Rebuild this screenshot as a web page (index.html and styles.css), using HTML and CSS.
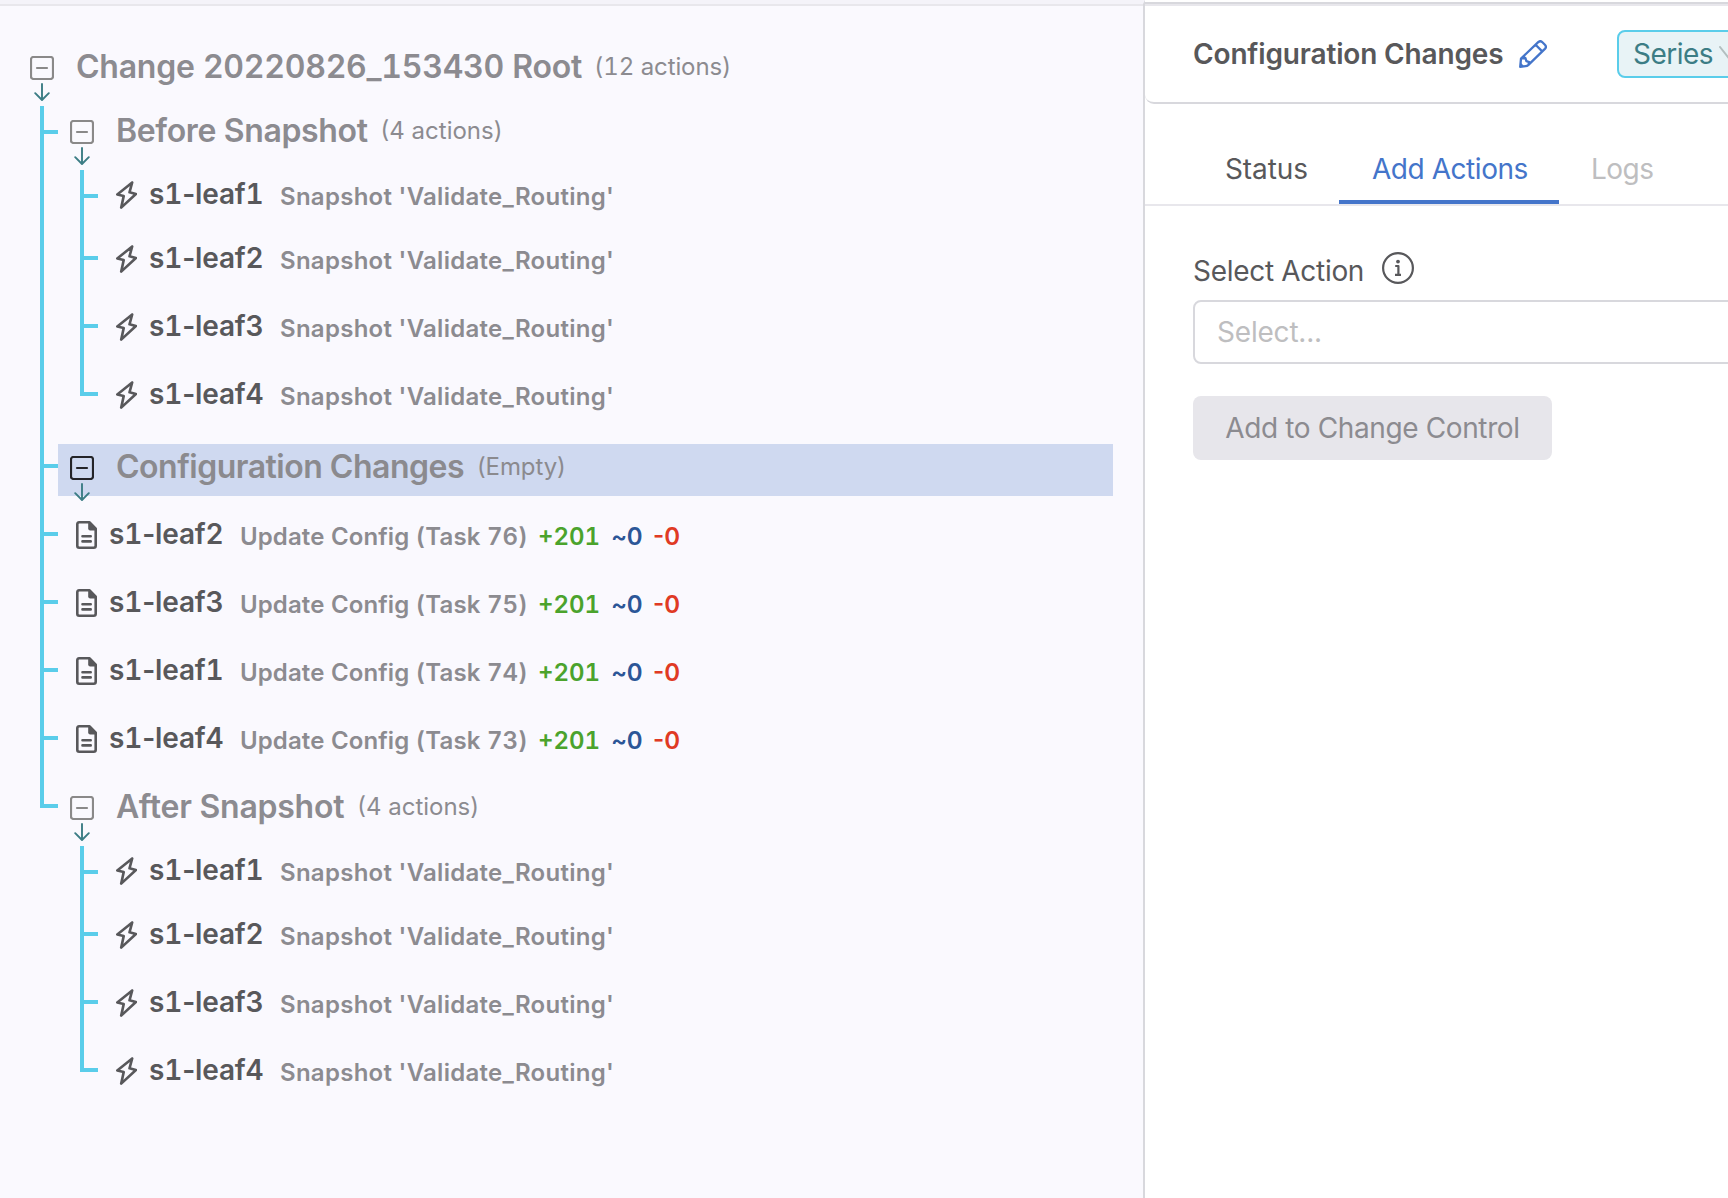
FILE: index.html
```
<!DOCTYPE html>
<html lang="en">
<head>
<meta charset="utf-8">
<title>Change Control</title>
<link rel="stylesheet" href="styles.css">
</head>
<body>
<svg class="sprite" aria-hidden="true">
  <symbol id="collapse" viewBox="0 0 24 24"><rect x="1" y="1" width="22" height="22" rx="2.5"/><path d="M7 12h10"/></symbol>
  <symbol id="down" viewBox="0 0 16 18"><path d="M8 1v15.8M1.2 10.2 8 17l6.8-6.8"/></symbol>
  <symbol id="bolt" viewBox="0 0 21 28"><path d="M16.2 1.4 1.3 13.5l6.4 1.6L5.2 26.6 19.9 13l-6.4-1.7z"/></symbol>
  <symbol id="doc" viewBox="0 0 21 28"><path d="M3.2 1.3h10.4l6.1 6.3v17.1a2 2 0 0 1-2 2H3.2a2 2 0 0 1-1.9-2V3.3a2 2 0 0 1 1.9-2z"/><path class="fold" fill="currentColor" stroke="none" d="M12.2 1v6.4a2 2 0 0 0 2 2h6V7.6L14 1z"/><path d="M6.5 15.2h8.2M6.5 20.4h8.2"/></symbol>
</svg>
<div class="app">
  <main class="stage">
    <ul class="tree root">
      <li>
        <div class="row group"><svg class="box"><use href="#collapse"/></svg><svg class="arrow"><use href="#down"/></svg><span class="title long">Change 20220826_153430 Root</span><span class="count">(12 actions)</span></div>
        <ul class="tree">
          <li>
            <div class="row group"><svg class="box"><use href="#collapse"/></svg><svg class="arrow"><use href="#down"/></svg><span class="title">Before Snapshot</span><span class="count">(4 actions)</span></div>
            <ul class="tree">
              <li><div class="row leaf"><svg class="glyph"><use href="#bolt"/></svg><span class="name">s<b>1</b>-leaf<b>1</b></span><span class="desc">Snapshot 'Validate_Routing'</span></div></li>
              <li><div class="row leaf"><svg class="glyph"><use href="#bolt"/></svg><span class="name">s<b>1</b>-leaf<b>2</b></span><span class="desc">Snapshot 'Validate_Routing'</span></div></li>
              <li><div class="row leaf"><svg class="glyph"><use href="#bolt"/></svg><span class="name">s<b>1</b>-leaf<b>3</b></span><span class="desc">Snapshot 'Validate_Routing'</span></div></li>
              <li><div class="row leaf"><svg class="glyph"><use href="#bolt"/></svg><span class="name">s<b>1</b>-leaf<b>4</b></span><span class="desc">Snapshot 'Validate_Routing'</span></div></li>
            </ul>
          </li>
          <li>
            <div class="row group selected"><svg class="box"><use href="#collapse"/></svg><svg class="arrow"><use href="#down"/></svg><span class="title">Configuration Changes</span><span class="count">(Empty)</span></div>
          </li>
          <li><div class="row leaf"><svg class="glyph"><use href="#doc"/></svg><span class="name">s<b>1</b>-leaf<b>2</b></span><span class="desc task">Update Config (Task 76)</span><span class="added">+201</span><span class="changed">~0</span><span class="removed">-0</span></div></li>
          <li><div class="row leaf"><svg class="glyph"><use href="#doc"/></svg><span class="name">s<b>1</b>-leaf<b>3</b></span><span class="desc task">Update Config (Task 75)</span><span class="added">+201</span><span class="changed">~0</span><span class="removed">-0</span></div></li>
          <li><div class="row leaf"><svg class="glyph"><use href="#doc"/></svg><span class="name">s<b>1</b>-leaf<b>1</b></span><span class="desc task">Update Config (Task 74)</span><span class="added">+201</span><span class="changed">~0</span><span class="removed">-0</span></div></li>
          <li><div class="row leaf"><svg class="glyph"><use href="#doc"/></svg><span class="name">s<b>1</b>-leaf<b>4</b></span><span class="desc task">Update Config (Task 73)</span><span class="added">+201</span><span class="changed">~0</span><span class="removed">-0</span></div></li>
          <li>
            <div class="row group"><svg class="box"><use href="#collapse"/></svg><svg class="arrow"><use href="#down"/></svg><span class="title after">After Snapshot</span><span class="count">(4 actions)</span></div>
            <ul class="tree">
              <li><div class="row leaf"><svg class="glyph"><use href="#bolt"/></svg><span class="name">s<b>1</b>-leaf<b>1</b></span><span class="desc">Snapshot 'Validate_Routing'</span></div></li>
              <li><div class="row leaf"><svg class="glyph"><use href="#bolt"/></svg><span class="name">s<b>1</b>-leaf<b>2</b></span><span class="desc">Snapshot 'Validate_Routing'</span></div></li>
              <li><div class="row leaf"><svg class="glyph"><use href="#bolt"/></svg><span class="name">s<b>1</b>-leaf<b>3</b></span><span class="desc">Snapshot 'Validate_Routing'</span></div></li>
              <li><div class="row leaf"><svg class="glyph"><use href="#bolt"/></svg><span class="name">s<b>1</b>-leaf<b>4</b></span><span class="desc">Snapshot 'Validate_Routing'</span></div></li>
            </ul>
          </li>
        </ul>
      </li>
    </ul>
  </main>
  <aside class="panel">
    <header class="head">
      <h1>Configuration Changes</h1>
      <svg class="pencil" viewBox="0 0 28 28"><path d="M1.2 26.8 2 18.6 19.2 2.2a3 3 0 0 1 4.2 0l2.5 2.5a3 3 0 0 1 0 4.2L9.2 25.1a4 4 0 0 1-2.6 1.1zM16.6 4.8l6.6 6.6M2.6 18.4 6.4 18l1 3.2 2.8.9-.8 2.8"/><path class="tip" d="m1.2 26.8.5-4.4 3.6 4z"/></svg>
      <div class="series">Series<svg class="caret" viewBox="0 0 24 16"><path d="m1 1 11 14L23 1"/></svg></div>
    </header>
    <nav class="tabs"><span class="tab">Status</span><span class="tab active">Add Actions</span><span class="tab disabled">Logs</span></nav>
    <section class="form">
      <div class="label"><span>Select Action</span><svg class="info" viewBox="0 0 32 32"><circle cx="16" cy="16" r="14.9"/><circle class="dot" cx="16" cy="9.6" r="1.9"/><path d="M13.2 14h3.2v8.6M13 22.8h6"/></svg></div>
      <div class="select">Select...</div>
      <button class="add" disabled>Add to Change Control</button>
    </section>
  </aside>
</div>
</body>
</html>
```
FILE: styles.css
```
* { box-sizing: border-box; }
body { margin: 0; font-family: Inter, sans-serif; font-size: 28px; color: #58585b; background: #fff; overflow: hidden; }
.sprite { position: absolute; width: 0; height: 0; }
svg { flex: none; fill: none; stroke: currentColor; stroke-linecap: round; stroke-linejoin: round; }
.app { display: flex; width: 1728px; height: 1198px; overflow: hidden; }

/* change tree */
.stage { width: 1145px; flex: none; background: #faf9fe; border-right: 2px solid #d8d8dd; border-top: 4px solid #f4f3f9; }
.root { border-top: 2px solid #e8e7ec; }
ul { list-style: none; margin: 0; padding: 0; }
.root { padding: 38px 30px 0 18px; }
li { position: relative; }
.tree .tree { padding-left: 40px; }
.tree .tree > li { padding-bottom: 16px; }
.tree .tree > li:first-child:not(:has(.tree)) { padding-bottom: 12px; }
.tree .tree > li:has(> .tree) { padding-bottom: 4px; }
.tree .tree > li::before { content: ""; position: absolute; left: -14px; top: 20px; width: 14px; height: 4px; background: #5acdea; }
.tree .tree > li:first-child::before { top: 22px; }
.tree .tree > li::after { content: ""; position: absolute; left: -18px; top: 0; bottom: 0; width: 4px; background: #5acdea; }
.tree .tree > li:first-child::after { top: -2px; }
.tree .tree > li:last-child::after { bottom: auto; height: 24px; }
.row { position: relative; display: flex; align-items: flex-start; height: 52px; line-height: 44px; white-space: nowrap; }
.group { padding-left: 12px; margin-bottom: 12px; color: #8c8b90; }
.box { width: 24px; height: 24px; margin-top: 12px; stroke-width: 2.2; color: #8a8989; }
.arrow { position: absolute; left: 16px; top: 39px; width: 16px; height: 18px; color: #3c7d85; stroke-width: 1.9; }
.title { margin-left: 22px; font-size: 32px; line-height: 45px; font-weight: 600; letter-spacing: -.35px; }
.title.long { font-variant-numeric: tabular-nums; letter-spacing: -.25px; }
.title.after { letter-spacing: -.25px; }
.count { margin-left: 13px; margin-top: 1px; font-size: 24px; }
.title.long + .count { margin-left: 12px; font-variant-numeric: tabular-nums; letter-spacing: -.1px; }
.selected { background: #cfd9f0; margin-bottom: 0; color: #8b8a8e; }
.selected .title { letter-spacing: -.5px; }
.selected .count { letter-spacing: -.1px; }
.selected .box { color: #242428; }
.leaf { padding-left: 18px; font-weight: 600; color: #58585b; }
.glyph { width: 21px; height: 28px; margin-top: 9px; stroke-width: 2.6; }
.name { width: 131px; margin-left: 12px; letter-spacing: -.15px; }
.name b { font-weight: 600; font-variant-numeric: tabular-nums; }
.desc, .added, .changed, .removed { margin-top: 3px; font-size: 24px; }
.desc { color: #8c8b90; letter-spacing: .28px; }
.task { width: 298px; letter-spacing: .1px; font-variant-numeric: tabular-nums; }
.added { width: 73px; color: #4ba32c; font-variant-numeric: tabular-nums; }
.changed { width: 42px; color: #2c5697; letter-spacing: -.3px; }
.removed { color: #e03a24; }

/* detail panel */
.panel { flex: none; width: 800px; background: #fff; padding-top: 2px; }
.head { display: flex; align-items: center; height: 102px; padding-top: 2px; padding-left: 48px; border-top: 2px solid #d8d8dd; border-bottom: 2px solid #d8d8dd; border-bottom-left-radius: 9px; box-shadow: inset 0 2px #e8e7ec; }
h1 { width: 326px; margin: 0; font-size: 28px; font-weight: 600; letter-spacing: -.15px; color: #58585a; }
.pencil { width: 28px; height: 28px; color: #4475ca; stroke-width: 2.3; }
.tip { fill: currentColor; stroke: none; }
.series { display: flex; align-items: center; width: 160px; height: 48px; margin-left: 70px; padding-left: 14px; border: 2px solid #5acdea; border-radius: 8px; background: #e8f3f6; color: #3c7d85; letter-spacing: -.5px; }
.caret { width: 24px; height: 16px; margin-left: 6px; color: #b3bfc0; stroke-width: 2; }
.tabs { display: flex; align-items: flex-end; height: 102px; padding-left: 48px; border-bottom: 2px solid #e8e7ec; }
.tab { height: 67px; padding-left: 32px; line-height: 65px; border-bottom: 4px solid transparent; color: #58585a; width: 146px; letter-spacing: -.1px; }
.active { width: 220px; padding-left: 33px; color: #4475ca; border-color: #4475ca; letter-spacing: -.45px; }
.disabled { color: #bebec0; letter-spacing: -.5px; }
.form { padding: 44px 0 0 48px; }
.label { display: flex; height: 50px; line-height: 43px; letter-spacing: -.3px; }
.label span { width: 189px; }
.info { width: 32px; height: 32px; margin-top: 2px; stroke-width: 2.2; stroke-linecap: butt; }
.dot { fill: currentColor; stroke: none; }
.select { height: 64px; padding-left: 22px; line-height: 61px; border: 2px solid #d8d8dd; border-radius: 8px; color: #bebec0; letter-spacing: -.2px; }
.add { display: block; width: 359px; height: 64px; margin-top: 32px; padding: 0; border: 0; border-radius: 8px; background: #e7e6eb; color: #8c8b90; font: 400 28px/64px Inter, sans-serif; letter-spacing: -.38px; }
```
